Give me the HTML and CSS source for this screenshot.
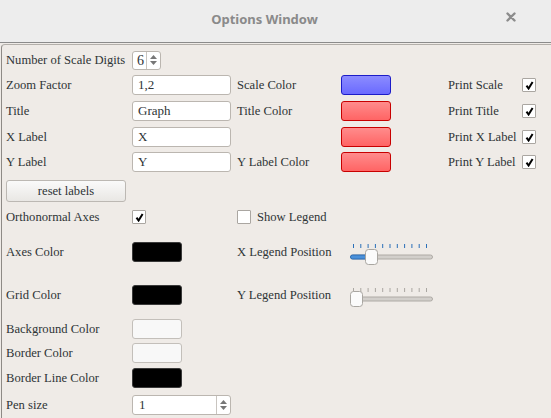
FILE: index.html
```html
<!DOCTYPE html>
<html>
<head>
<meta charset="utf-8">
<link rel="stylesheet" href="styles.css">
</head>
<body>
<div class="titlebar">
  <span class="title">Options Window</span>
  <span class="close">
    <svg width="10" height="10" viewBox="0 0 10 10"><path d="M1.5 1.5 L8.5 8.5 M8.5 1.5 L1.5 8.5" stroke="#8c8c8c" stroke-width="2.4" stroke-linecap="round"/></svg>
  </span>
</div>
<div class="frame">
  <div class="grid">
    <!-- row 1 -->
    <div class="lbl r1 c1">Number of Scale Digits</div>
    <div class="r1 c2"><div class="spin small"><span class="spin-val">6</span><span class="arrows"><svg width="9" height="14" viewBox="0 0 9 14"><path d="M1 6 L4.5 2 L8 6 Z M1 8 L4.5 12 L8 8 Z" fill="#777"/></svg></span></div></div>

    <!-- row 2 -->
    <div class="lbl r2 c1">Zoom Factor</div>
    <div class="r2 c2"><div class="input">1,2</div></div>
    <div class="lbl r2 c3">Scale Color</div>
    <div class="r2 c4"><div class="colorbtn blue"></div></div>
    <div class="lbl r2 c5">Print Scale</div>
    <div class="r2 c6"><div class="check on"><svg width="9" height="9" viewBox="0 0 9 9"><path d="M1.5 4.6 L3.6 7.5 L7.6 1" stroke="#000" stroke-width="2" fill="none"/></svg></div></div>

    <!-- row 3 -->
    <div class="lbl r3 c1">Title</div>
    <div class="r3 c2"><div class="input">Graph</div></div>
    <div class="lbl r3 c3">Title Color</div>
    <div class="r3 c4"><div class="colorbtn red"></div></div>
    <div class="lbl r3 c5">Print Title</div>
    <div class="r3 c6"><div class="check on"><svg width="9" height="9" viewBox="0 0 9 9"><path d="M1.5 4.6 L3.6 7.5 L7.6 1" stroke="#000" stroke-width="2" fill="none"/></svg></div></div>

    <!-- row 4 -->
    <div class="lbl r4 c1">X Label</div>
    <div class="r4 c2"><div class="input">X</div></div>
    <div class="r4 c4"><div class="colorbtn red"></div></div>
    <div class="lbl r4 c5">Print X Label</div>
    <div class="r4 c6"><div class="check on"><svg width="9" height="9" viewBox="0 0 9 9"><path d="M1.5 4.6 L3.6 7.5 L7.6 1" stroke="#000" stroke-width="2" fill="none"/></svg></div></div>

    <!-- row 5 -->
    <div class="lbl r5 c1">Y Label</div>
    <div class="r5 c2"><div class="input">Y</div></div>
    <div class="lbl r5 c3">Y Label Color</div>
    <div class="r5 c4"><div class="colorbtn red"></div></div>
    <div class="lbl r5 c5">Print Y Label</div>
    <div class="r5 c6"><div class="check on"><svg width="9" height="9" viewBox="0 0 9 9"><path d="M1.5 4.6 L3.6 7.5 L7.6 1" stroke="#000" stroke-width="2" fill="none"/></svg></div></div>

    <!-- row 6 -->
    <div class="r6 c1"><div class="button">reset labels</div></div>

    <!-- row 7 -->
    <div class="lbl r7 c1">Orthonormal Axes</div>
    <div class="r7 c2"><div class="check on"><svg width="9" height="9" viewBox="0 0 9 9"><path d="M1.5 4.6 L3.6 7.5 L7.6 1" stroke="#000" stroke-width="2" fill="none"/></svg></div></div>
    <div class="lbl r7 c3 span2"><div class="check"></div><span class="chk-text">Show Legend</span></div>

    <!-- row 8 -->
    <div class="lbl r8 c1">Axes Color</div>
    <div class="r8 c2"><div class="colorbtn black"></div></div>
    <div class="lbl r8 c3">X Legend Position</div>
    <div class="r8 c4">
      <svg class="slider x" width="86" height="22" viewBox="0 0 86 22">
        <g stroke="#2a6fb8" stroke-width="1">
          <path d="M3.5 1 V5 M10.8 1 V5 M18.1 1 V5 M25.4 1 V5 M32.7 1 V5 M40 1 V5 M47.3 1 V5 M54.6 1 V5 M61.9 1 V5 M69.2 1 V5 M76.5 1 V5"/>
        </g>
        <rect x="0.5" y="12" width="82" height="4" rx="2" fill="#d2cfcb" stroke="#aeaaa5"/>
        <rect x="0.5" y="12" width="18" height="4" rx="2" fill="#4a90d9" stroke="#2c6db5"/>
        <rect x="15.5" y="6.5" width="12" height="15" rx="3" fill="#fbfbfb" stroke="#a9a6a1"/>
      </svg>
    </div>

    <!-- row 9 -->
    <div class="lbl r9 c1">Grid Color</div>
    <div class="r9 c2"><div class="colorbtn black"></div></div>
    <div class="lbl r9 c3">Y Legend Position</div>
    <div class="r9 c4">
      <svg class="slider y" width="86" height="20" viewBox="0 0 86 20">
        <g stroke="#aaa7a2" stroke-width="1">
          <path d="M3.5 1 V5 M10.8 1 V5 M18.1 1 V5 M25.4 1 V5 M32.7 1 V5 M40 1 V5 M47.3 1 V5 M54.6 1 V5 M61.9 1 V5 M69.2 1 V5 M76.5 1 V5"/>
        </g>
        <rect x="0.5" y="10" width="82" height="4" rx="2" fill="#d2cfcb" stroke="#aeaaa5"/>
        <rect x="0.5" y="4.5" width="12" height="15" rx="3" fill="#fbfbfb" stroke="#a9a6a1"/>
      </svg>
    </div>

    <!-- row 10 -->
    <div class="lbl r10 c1">Background Color</div>
    <div class="r10 c2"><div class="colorbtn white"></div></div>

    <!-- row 11 -->
    <div class="lbl r11 c1">Border Color</div>
    <div class="r11 c2"><div class="colorbtn white"></div></div>

    <!-- row 12 -->
    <div class="lbl r12 c1">Border Line Color</div>
    <div class="r12 c2"><div class="colorbtn black"></div></div>

    <!-- row 13 -->
    <div class="lbl r13 c1">Pen size</div>
    <div class="r13 c2"><div class="spin wide"><span class="spin-val">1</span><span class="arrows"><svg width="9" height="14" viewBox="0 0 9 14"><path d="M1 6 L4.5 2 L8 6 Z M1 8 L4.5 12 L8 8 Z" fill="#777"/></svg></span></div></div>
  </div>
</div>
</body>
</html>
```

FILE: styles.css
```css
html, body {
  margin: 0;
  padding: 0;
  width: 551px;
  height: 418px;
  overflow: hidden;
  background: #efebe7;
}

body {
  font-family: "Liberation Serif", "DejaVu Serif", serif;
  font-size: 12.6px;
  color: #2e3436;
}

.titlebar {
  height: 42px;
  background: #ededed;
  border-bottom: 1px solid #8b8b8b;
  display: flex;
  align-items: center;
  justify-content: center;
  position: relative;
}

.title {
  font-family: "Noto Sans", "DejaVu Sans", sans-serif;
  font-weight: bold;
  font-size: 13px;
  color: #8a8a8a;
  margin-right: 22px;
  margin-top: -5px;
}

.close {
  position: absolute;
  right: 35px;
  top: 12px;
  width: 10px;
  height: 10px;
  display: flex;
}

.frame {
  margin: 1px 0 0 1px;
  border-top: 1px solid #b3afaa;
  border-left: 1px solid #8e8a86;
  border-top-left-radius: 4px;
  height: 370px;
  padding: 3px 0 0 4px;
}

.grid {
  display: grid;
  grid-template-columns: 126px 105px 104px 107px 74px 30px;
  grid-template-rows: 24px 26px 26px 26px 24px 32px 22px 48px 38px 30px 18px 32px 22px;
  align-items: center;
}

.r1 { grid-row: 1; } .r2 { grid-row: 2; } .r3 { grid-row: 3; } .r4 { grid-row: 4; }
.r5 { grid-row: 5; } .r6 { grid-row: 6; } .r7 { grid-row: 7; } .r8 { grid-row: 8; }
.r9 { grid-row: 9; } .r10 { grid-row: 10; } .r11 { grid-row: 11; } .r12 { grid-row: 12; }
.r13 { grid-row: 13; }
.c1 { grid-column: 1; } .c2 { grid-column: 2; } .c3 { grid-column: 3; }
.c4 { grid-column: 4; } .c5 { grid-column: 5; } .c6 { grid-column: 6; }
.span2 { grid-column: 3 / span 2; }

.lbl {
  white-space: nowrap;
  line-height: 16px;
  color: #2e3436;
}

.input {
  box-sizing: border-box;
  width: 99px;
  height: 20px;
  background: #fff;
  border: 1px solid #bbb6b0;
  border-radius: 3px;
  padding: 0 5px;
  line-height: 18px;
  font-size: 13px;
  color: #2e3436;
}

.spin {
  box-sizing: border-box;
  height: 19px;
  background: #fff;
  border: 1px solid #bbb6b0;
  border-radius: 3px;
  display: flex;
  align-items: stretch;
}
.spin.small { width: 29px; }
.spin.wide { width: 99px; height: 20px; }
.spin-val {
  flex: 1;
  padding-left: 5px;
  line-height: 17px;
}
.spin.small .spin-val { padding-left: 4px; font-size: 14px; }
.spin.wide .spin-val { padding-left: 6px; line-height: 18px; font-size: 13px; }
.arrows {
  width: 13px;
  border-left: 1px solid #c9c5c0;
  display: flex;
  align-items: center;
  justify-content: center;
}

.colorbtn {
  box-sizing: border-box;
  width: 50px;
  height: 20px;
  border-radius: 3px;
  border: 1px solid #000;
}
.colorbtn.blue {
  background: linear-gradient(#8c8cff, #6a6aff);
  border-color: #1c1cc8;
}
.colorbtn.red {
  background: linear-gradient(#ff8c8c, #ff6464);
  border-color: #c80000;
}
.colorbtn.black {
  background: #000;
  border-color: #3a3a3a;
}
.colorbtn.white {
  background: #f8f8f8;
  border-color: #c3bfba;
}

.check {
  box-sizing: border-box;
  width: 14px;
  height: 14px;
  background: #fff;
  border: 1px solid #aaa6a1;
  border-radius: 1px;
  display: flex;
  align-items: center;
  justify-content: center;
}

.c3.span2 {
  display: flex;
  align-items: center;
}
.chk-text { margin-left: 6px; }

.button {
  box-sizing: border-box;
  width: 120px;
  height: 22px;
  border: 1px solid #bcb8b3;
  border-radius: 3px;
  background: linear-gradient(#fafafa, #e9e7e4);
  text-align: center;
  line-height: 20px;
  color: #2e3436;
  margin-top: 1px;
}

.slider { display: block; }
.slider.x { margin-left: 9px; margin-top: 3px; }
.slider.y { margin-left: 9px; margin-top: 4px; }
```
